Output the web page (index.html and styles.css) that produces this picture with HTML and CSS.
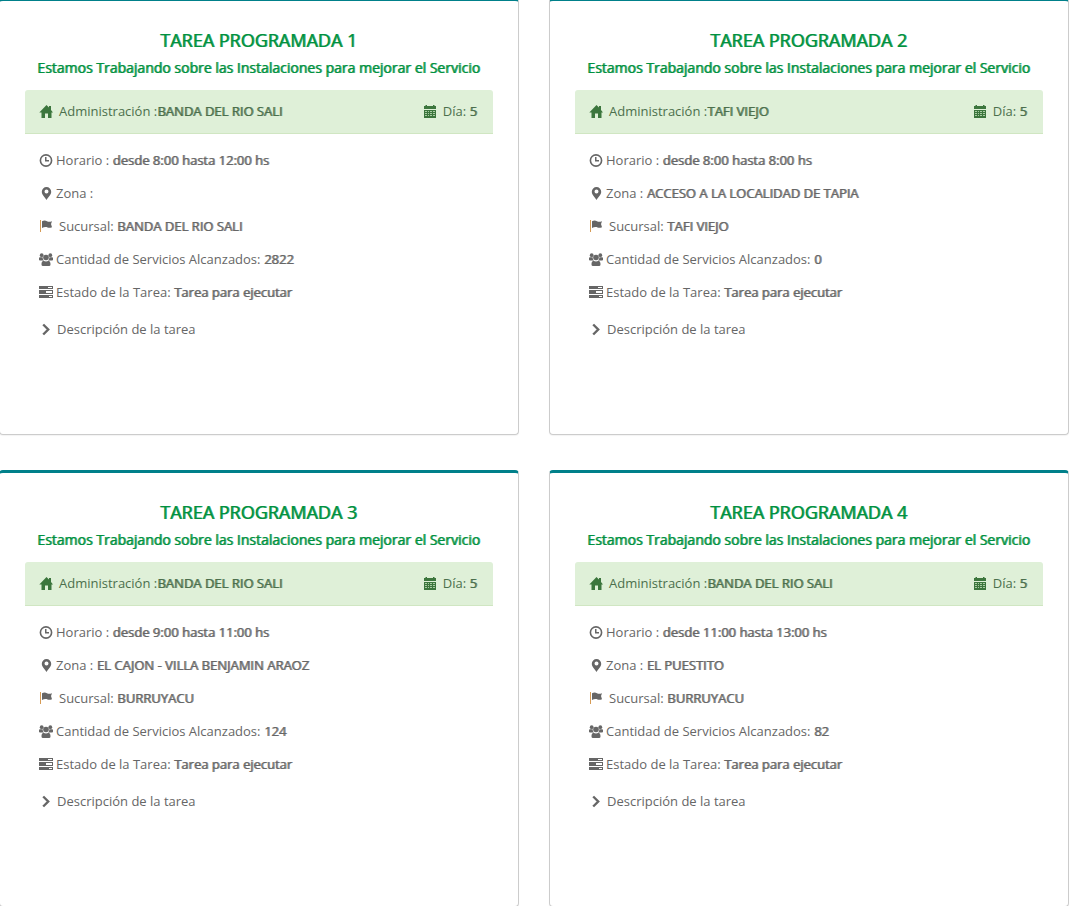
FILE: index.html
```html
<!DOCTYPE html>
<html lang="es">
<head>
<meta charset="utf-8">
<title>Tareas programadas</title>
<link rel="stylesheet" href="styles.css">
</head>
<body>
<svg class="sprite" aria-hidden="true">
  <symbol id="home" viewBox="0 0 14 14"><path d="M7.500 0 .3 7.400H2.500V13H6V8.500h3V13h3.500V7.400H14L12 5V1h-2v1.500z"/></symbol>
  <symbol id="calendar" viewBox="0 0 14 14"><path d="M1 1h1.500V0H4v1h6V0h1.500v1H13v3H1z"/><path d="M1 5h12v8H1z"/><path class="grid" d="M2 6h2v1H2zm3 0h1v1H5zm2 0h2v1H7zm3 0h2v1h-2zM2 8h2v1H2zm3 0h1v1H5zm2 0h2v1H7zm3 0h2v1h-2zM2 10h2v1H2zm3 0h1v1H5zm2 0h2v1H7zm3 0h2v1h-2z"/></symbol>
  <symbol id="clock" viewBox="0 0 14 14"><circle cx="7" cy="6.500" r="5.600" fill="none" stroke="currentColor" stroke-width="1.600"/><path d="M6 3h1.500v3H10v1.500H6z"/></symbol>
  <symbol id="pin" viewBox="0 0 14 14"><path fill-rule="evenodd" d="M7.500 0a4.700 4.700 0 0 1 4.700 4.700C12.200 8 9 10 7.500 13 6 10 2.800 8 2.800 4.700A4.700 4.700 0 0 1 7.500 0zm0 2.600a2 2 0 1 0 0 4 2 2 0 0 0 0-4z"/></symbol>
  <symbol id="flag" viewBox="0 0 14 14"><path class="pole" d="M1 0h1v12H1z"/><path d="M3 1.200c2-1 3.500-.8 5 0s2.800.6 5 0L12 4l1 3.200c-1.800.8-3.300.8-4.500.2S5 6.700 3 8z"/></symbol>
  <symbol id="users" viewBox="0 0 14 14"><circle cx="2.700" cy="2.200" r="1.900"/><circle cx="11.300" cy="2.200" r="1.900"/><circle cx="7" cy="4.500" r="2.800"/><path d="M0 5q0-.8 1-.8h2.600q0 2 1.200 3.300H1Q0 7.500 0 6.700zM14 5q0-.8-1-.8h-2.600q0 2-1.200 3.300H13q1 0 1-.8zM2.500 11.500c0-2 .5-3.500 2-3.700q2.500 1.200 5 0c1.500.2 2 1.700 2 3.700q0 1.500-1.500 1.500H4q-1.500 0-1.500-1.500z"/></symbol>
  <symbol id="tasks" viewBox="0 0 14 14"><path fill-rule="evenodd" d="M0 0h14v3H0zm9 1v1h4V1zM0 4h14v4H0zm7 1v2h6V5zM0 9h14v3H0zm10 1v1h3v-1z"/></symbol>
  <symbol id="chevron" viewBox="0 0 14 14"><path d="M4.200 1.500 9.200 6.500l-5 5" fill="none" stroke="currentColor" stroke-width="2.400"/></symbol>
</svg>
<main class="tasks">
  <article class="card">
    <h2 class="title">TAREA PROGRAMADA 1</h2>
    <p class="subtitle">Estamos Trabajando sobre las Instalaciones para mejorar el Servicio</p>
    <div class="band"><span><svg class="icon wide"><use href="#home"/></svg>Administración :<b>BANDA DEL RIO SALI</b></span><span><svg class="icon wide"><use href="#calendar"/></svg>Día: <b>5</b></span></div>
    <ul class="facts">
      <li><svg class="icon"><use href="#clock"/></svg>Horario : <b>desde 8:00 hasta 12:00 hs</b></li>
      <li><svg class="icon"><use href="#pin"/></svg>Zona :</li>
      <li><svg class="icon wide"><use href="#flag"/></svg>Sucursal: <b>BANDA DEL RIO SALI</b></li>
      <li><svg class="icon"><use href="#users"/></svg>Cantidad de Servicios Alcanzados: <b>2822</b></li>
      <li><svg class="icon"><use href="#tasks"/></svg>Estado de la Tarea: <b>Tarea para ejecutar</b></li>
    </ul>
    <button class="more" type="button"><svg class="icon mid"><use href="#chevron"/></svg>Descripción de la tarea</button>
  </article>
  <article class="card">
    <h2 class="title">TAREA PROGRAMADA 2</h2>
    <p class="subtitle">Estamos Trabajando sobre las Instalaciones para mejorar el Servicio</p>
    <div class="band"><span><svg class="icon wide"><use href="#home"/></svg>Administración :<b>TAFI VIEJO</b></span><span><svg class="icon wide"><use href="#calendar"/></svg>Día: <b>5</b></span></div>
    <ul class="facts">
      <li><svg class="icon"><use href="#clock"/></svg>Horario : <b>desde 8:00 hasta 8:00 hs</b></li>
      <li><svg class="icon"><use href="#pin"/></svg>Zona : <b>ACCESO A LA LOCALIDAD DE TAPIA</b></li>
      <li><svg class="icon wide"><use href="#flag"/></svg>Sucursal: <b>TAFI VIEJO</b></li>
      <li><svg class="icon"><use href="#users"/></svg>Cantidad de Servicios Alcanzados: <b>0</b></li>
      <li><svg class="icon"><use href="#tasks"/></svg>Estado de la Tarea: <b>Tarea para ejecutar</b></li>
    </ul>
    <button class="more" type="button"><svg class="icon mid"><use href="#chevron"/></svg>Descripción de la tarea</button>
  </article>
  <article class="card">
    <h2 class="title">TAREA PROGRAMADA 3</h2>
    <p class="subtitle">Estamos Trabajando sobre las Instalaciones para mejorar el Servicio</p>
    <div class="band"><span><svg class="icon wide"><use href="#home"/></svg>Administración :<b>BANDA DEL RIO SALI</b></span><span><svg class="icon wide"><use href="#calendar"/></svg>Día: <b>5</b></span></div>
    <ul class="facts">
      <li><svg class="icon"><use href="#clock"/></svg>Horario : <b>desde 9:00 hasta 11:00 hs</b></li>
      <li><svg class="icon"><use href="#pin"/></svg>Zona : <b>EL CAJON - VILLA BENJAMIN ARAOZ</b></li>
      <li><svg class="icon wide"><use href="#flag"/></svg>Sucursal: <b>BURRUYACU</b></li>
      <li><svg class="icon"><use href="#users"/></svg>Cantidad de Servicios Alcanzados: <b>124</b></li>
      <li><svg class="icon"><use href="#tasks"/></svg>Estado de la Tarea: <b>Tarea para ejecutar</b></li>
    </ul>
    <button class="more" type="button"><svg class="icon mid"><use href="#chevron"/></svg>Descripción de la tarea</button>
  </article>
  <article class="card">
    <h2 class="title">TAREA PROGRAMADA 4</h2>
    <p class="subtitle">Estamos Trabajando sobre las Instalaciones para mejorar el Servicio</p>
    <div class="band"><span><svg class="icon wide"><use href="#home"/></svg>Administración :<b>BANDA DEL RIO SALI</b></span><span><svg class="icon wide"><use href="#calendar"/></svg>Día: <b>5</b></span></div>
    <ul class="facts">
      <li><svg class="icon"><use href="#clock"/></svg>Horario : <b>desde 11:00 hasta 13:00 hs</b></li>
      <li><svg class="icon"><use href="#pin"/></svg>Zona : <b>EL PUESTITO</b></li>
      <li><svg class="icon wide"><use href="#flag"/></svg>Sucursal: <b>BURRUYACU</b></li>
      <li><svg class="icon"><use href="#users"/></svg>Cantidad de Servicios Alcanzados: <b>82</b></li>
      <li><svg class="icon"><use href="#tasks"/></svg>Estado de la Tarea: <b>Tarea para ejecutar</b></li>
    </ul>
    <button class="more" type="button"><svg class="icon mid"><use href="#chevron"/></svg>Descripción de la tarea</button>
  </article>
</main>
</body>
</html>
```
FILE: styles.css
```css
* { box-sizing: border-box; }
body {
  margin: 0;
  overflow: hidden;
  background: #fff;
  color: #666;
  font: 13px/23px "Open Sans", sans-serif;
}
.sprite { display: none; }
.tasks {
  display: grid;
  grid-template-columns: 1fr 1fr;
  gap: 35px 30px;
  margin: -2px 2px 0 -1px;
}
.card {
  padding: 24px 25px 93px;
  border: 1px solid #ccc;
  border-top: 3px solid #00808a;
  border-radius: 4px;
  box-shadow: 0 1px 1px rgba(0, 0, 0, .05);
}
.title, .subtitle, b {
  font-weight: 400;
  text-shadow: 1px 0 color-mix(in srgb, currentColor 80%, transparent);
}
.title, .subtitle {
  margin: 0;
  padding-right: 1px;
  color: #00913f;
  text-align: center;
}
.title { font-size: 18px; line-height: 30px; }
.subtitle { font-size: 14px; line-height: 26px; margin-bottom: 9px; }
.band {
  display: flex;
  justify-content: space-between;
  padding: 10px 16px 10px 14px;
  border-bottom: 1px solid #d0e6c2;
  border-radius: 3px 3px 0 0;
  background: #dff0d8;
  color: #4b6f4c;
}
.band .icon { color: #3c763d; }
.facts {
  display: grid;
  gap: 10px;
  margin: 0;
  padding: 15px 14px 0;
  list-style: none;
}
.icon {
  width: 14px;
  height: 14px;
  margin-right: 3px;
  vertical-align: -3px;
  fill: currentColor;
}
.icon.mid { margin-right: 4px; }
.icon.wide { margin-right: 6px; }
.pole { fill: #d69b55; }
.grid { fill: #a9cba3; }
.more {
  display: block;
  margin: 14px 0 0 14px;
  padding: 0;
  border: 0;
  background: none;
  color: inherit;
  font: inherit;
}
```
